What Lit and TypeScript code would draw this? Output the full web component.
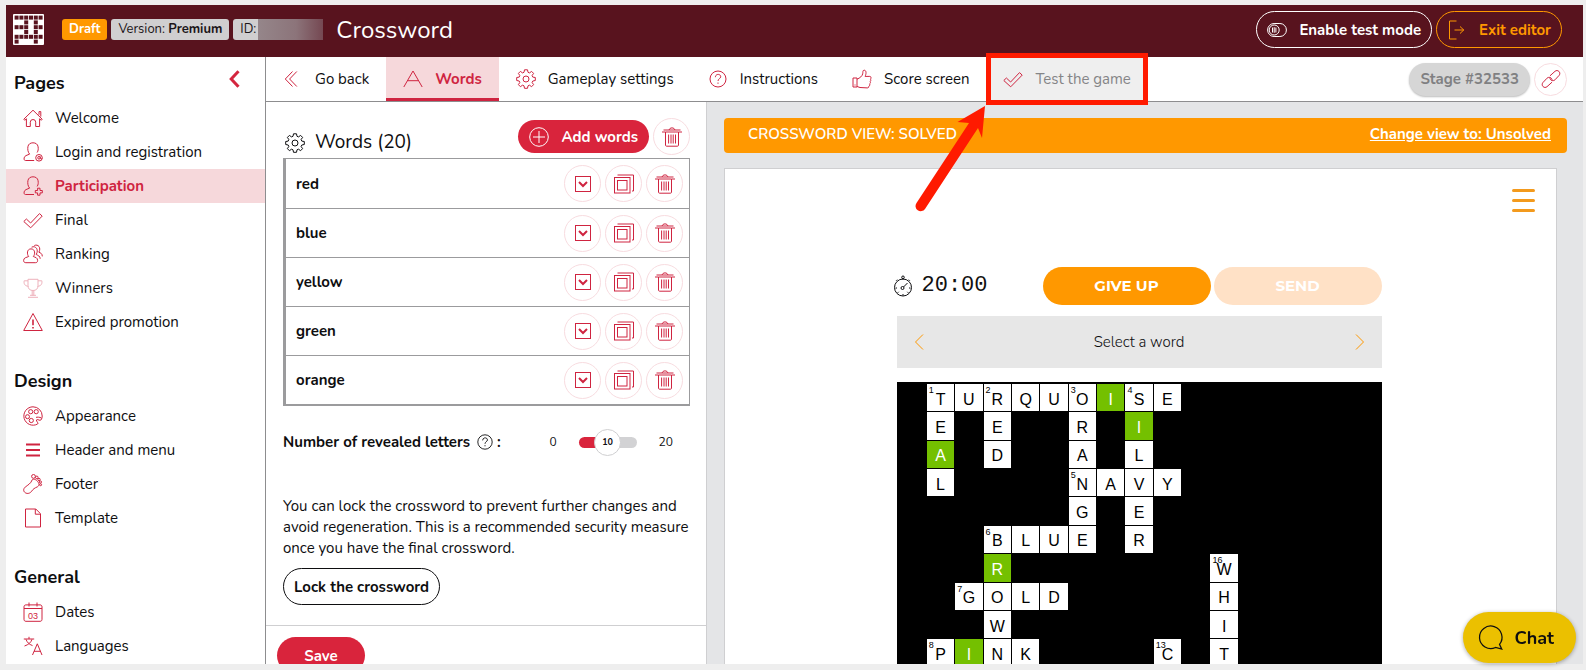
import { LitElement, html, svg, css, nothing, TemplateResult } from "lit";
import { customElement, property, state } from "lit/decorators.js";
import { classMap } from "lit/directives/class-map.js";

/* Line icons, all drawn on a 20x20 grid with the current colour. */
const icons: Record<string, TemplateResult> = {
  home: svg`<path d="M.8 11.200 10 2.200l9.200 9-1 1.100-1.600-1.600v7.800h-3.900v-4.300a2.700 2.700 0 0 0-5.400 0v4.300H3.400v-7.800l-1.600 1.600zM16 6.800V3.600h1.800v5"/>`,
  login: svg`<path d="M11.200 18.500H2.400C.4 18.500.6 14.600 3 13.600l3.600-1.500C4.700 10 4.600 7 4.900 4.800 5.300 2 7.500.8 10 .8s4.700 1.200 5.100 4c.3 2.200.2 4-1 5.700"/><circle cx="16" cy="15.800" r="3.300"/><circle cx="16" cy="15.800" r="1.300"/><path d="M17.300 14.500v1.800c.3 1 1.500.8 1.900 0"/>`,
  participate: svg`<path d="M11 18.500H2.400C.4 18.500.6 14.600 3 13.600l3.600-1.500C4.700 10 4.600 7 4.900 4.800 5.300 2 7.500.8 10 .8s4.700 1.200 5.100 4c.3 2.200.2 3.700-.9 5.600"/><path d="M14.600 12.200h2.400v2.300h2.300v2.400H17v2.300h-2.400v-2.300h-2.300v-2.400h2.300z"/>`,
  check: svg`<path d="M.8 11.500 3.400 9l4.200 4L16.500 3.600l2.700 2.500L7.700 17.800z"/>`,
  ranking: svg`<path d="M5.700 12.500c-2-2.200-1.900-7.600 2.300-7.600 4.300 0 4.400 5.400 2.300 7.600 2.100 1 4.300 1 4.300 4 0 1.700-1 2.200-2.200 2.200H2.800c-1.300 0-2.200-.8-2.200-2.200 0-3 3-3 5.100-4zM8.600 3.200c4-2 7.500 2.500 4.600 7.300 1.800 1 4 1.500 4 4.300M11.300 1.500c4-1.700 7 2.200 4.600 6.700 1.700.8 3.400 1.300 3.400 4.200"/>`,
  trophy: svg`<path d="M5 1.300h10v6.200c0 3.500-2 5-5 5s-5-1.500-5-5zM5 2.800H1.200C.6 5.600 1.700 8 5.300 8.300M15 2.800h3.800c.6 2.800-.5 5.200-4.100 5.500M9.200 12.500v5M10.800 12.500v5M7 17.300h6M5 19.300h10"/>`,
  warn: svg`<path d="M10 1.500 19.300 18.500H.7z"/><path stroke-width="1.600" d="M10 7.500v5.700M10 15v1.400"/>`,
  palette: svg`<path d="M10 .8a9.200 9.200 0 1 0 4.600 17.200c1.500-.9-1.500-2.500-1.200-4 .3-1.200 2.400.2 3.600.3 1.300 0 2.200-2 2.200-4.300A9.200 9.200 0 0 0 10 .8zM18.500 12c-2-1-4.500-1-5.500-.6"/><circle cx="7.700" cy="5.700" r="2.100"/><circle cx="13.200" cy="5.700" r="2.100"/><circle cx="4.500" cy="10.700" r="2"/><circle cx="8.300" cy="14.500" r="2.100"/>`,
  bars: svg`<path stroke-width="2" d="M3 4.500h14M3 10h14M3 15.500h14"/>`,
  foot: svg`<path d="M9.200 5.800C10.800 4.400 13.300 5.700 14.800 7.700c1.700 2.300 1.600 4.100-.6 5.200-2.600 1.200-4 2-5.400 4.100-1.500 2.300-4.300 3.200-6.600 1.700-2.100-1.500-1.900-4 0-5.600 2.500-2 5.800-3.600 7-7.300z"/><circle cx="10.500" cy="2.400" r="1.900"/><circle cx="13.800" cy="3.400" r="1.300"/><circle cx="16" cy="5.500" r="1.200"/><circle cx="17.400" cy="8" r="1.100"/><circle cx="17.600" cy="10.700" r="1"/>`,
  file: svg`<path d="M2.500 1h10.300l4.700 4.700V19h-15zM12.300 1v5.200h5.200"/>`,
  calendar: svg`<path d="M3 2.900h14c1.300 0 2 .7 2 2v12.400c0 1.300-.7 2-2 2H3c-1.300 0-2-.7-2-2V4.900c0-1.300.7-2 2-2zM1 6.500h18M6 .5v4M14 .5v4"/><text x="10" y="16.500" text-anchor="middle" font-size="9" fill="currentColor" stroke="none" font-family="Liberation Sans, sans-serif">03</text>`,
  language: svg`<path d="M.8 3h10.400M6 .8V3M3 3.300c1 3 3 5 6.500 6.300M9 3.300C8 6.500 5.500 8.700 1.500 10M9.500 19 14.300 7.800 19 19M11 15.300h6.500"/>`,
  back: svg`<path d="M9.500 2.500 2.300 10l7.200 7.500M13.800 2.500 6.600 10l7.200 7.500"/>`,
  letter: svg`<path d="M.8 18 10 2l9.200 16M4.500 11.700h11"/>`,
  gear: svg`<path d="M8.500.8h3l.5 2.500 1.500.6 2.100-1.500 2 2-1.500 2.100.7 1.600 2.500.4v3l-2.500.5-.7 1.500 1.500 2.100-2 2.100-2.100-1.500-1.500.6-.5 2.500h-3L8 16.800l-1.500-.6-2.100 1.500-2-2.100 1.400-2.100-.6-1.500-2.500-.5v-3l2.500-.4.6-1.600-1.400-2.100 2-2 2.100 1.500L8 3.300z"/><circle cx="10" cy="10" r="3"/>`,
  help: svg`<circle cx="10" cy="10" r="8"/><path d="M7.400 8.200c0-3.700 5.300-3.600 5.300-.5C12.700 9.800 10 9.600 10 12M10 13.500v1.300"/>`,
  thumb: svg`<path d="M1 9h4v9H1zM5 10.200c3-1.200 5.300-3.200 5.700-5.400.3-1.500-.1-3.600 1.400-3.600 2.400 0 2.300 3.500 1 6.200h4.700c1.600 0 1.400 2.200.6 2.700.6.800.5 1.800-.2 2.400.5.900.2 1.900-.5 2.300.3 1.100-.1 2.200-.9 2.500.2 1-.5 1.700-1.700 1.600L8 18.500l-3-1M3 15.500v1"/>`,
  plus: svg`<circle cx="10" cy="10" r="9.300"/><path d="M10 4v12M4 10h12"/>`,
  trash: svg`<path d="M0 5h3.400M16.600 5H20M1.500 3h17M7.200 3c0-2.800 5.600-2.800 5.600 0M3.500 5h13v13.200c0 .6-.5 1-1 1h-11c-.5 0-1-.4-1-1zM6.600 7.500v9M9 7.500v9M11.200 7.500v9M13.500 7.500v9"/>`,
  expand: svg`<rect x="2.500" y="2.500" width="15" height="15"/><path stroke-width="2" d="m6 8 4 4 4-4"/>`,
  copy: svg`<rect x=".5" y="3.500" width="15.500" height="15.500"/><rect x="3.500" y="6.500" width="9.500" height="9.500"/><path d="M3.500 1H19.500V17H18"/>`,
  toggle: svg`<rect x=".6" y="3.500" width="18.800" height="13" rx="6.500"/><circle cx="7.200" cy="10" r="5"/><path d="M5.500 7.500v5M7.200 7.200v5.600M8.900 7.500v5"/>`,
  exit: svg`<path d="M9.500 1H2.500v18h7M7.500 10h9.500M13 6.500l3.700 3.500L13 13.500"/>`,
  link: svg`<path d="M9 6.800 14 2.300c2.700-2.300 6.300 1.200 4.200 4L14 10.800c-2 2-5.600.3-5-2.500M11 13.200 6 17.700c-2.700 2.300-6.300-1.200-4.200-4L6 9.200c2-2 5.600-.3 5 2.500"/>`,
  watch: svg`<circle cx="10" cy="11.500" r="8.500"/><circle cx="10" cy="1.300" r="1.300"/><path d="M10 2.600v1M3.200 4.700l1-1M16.800 4.700l-1-1M10 18v1.500M2.500 12H4M16 12h1.500M4.700 16.800l1-1M15.300 16.800l-1-1M10.500 11l4-4"/><circle cx="9.500" cy="12" r="1.500"/>`,
  chat: svg`<path d="M17.200 15.500A9 9 0 1 0 14 18l5 1.300z"/>`,
  prev: svg`<path d="M14 2.500 6.500 10l7.500 7.500"/>`,
  next: svg`<path d="M6 2.500 13.500 10 6 17.500"/>`,
};

@customElement("ui-icon")
export class UiIcon extends LitElement {
  @property() name = "";
  static styles = css`
    :host { display: inline-flex; flex: none; width: 20px; height: 20px; }
    .glyph { width: 100%; height: 100%; overflow: visible; fill: none; stroke: currentColor; stroke-width: 1; }
  `;
  render() {
    return html`<svg class="glyph" viewBox="0 0 20 20" aria-hidden="true">${icons[this.name]}</svg>`;
  }
}

interface Cell { letter: string; no?: number; hit?: boolean }

const COLS = 17;
const ROWS = 11;

/* row, column, direction, number, word */
const entries: [number, number, "a" | "d", number, string][] = [
  [0, 1, "a", 1, "TURQUOISE"],
  [0, 1, "d", 1, "TEAL"],
  [0, 3, "d", 2, "RED"],
  [0, 6, "d", 3, "ORANGE"],
  [0, 8, "d", 4, "SILVER"],
  [3, 6, "a", 5, "NAVY"],
  [5, 3, "a", 6, "BLUE"],
  [5, 3, "d", 6, "BROWN"],
  [7, 2, "a", 7, "GOLD"],
  [9, 1, "a", 8, "PINK"],
  [6, 11, "d", 16, "WHIT"],
  [9, 9, "d", 13, "C"],
];
const revealed = ["0,7", "1,8", "2,1", "6,3", "9,2"];

function buildGrid(): (Cell | null)[] {
  const cells: (Cell | null)[] = Array(COLS * ROWS).fill(null);
  for (const [row, col, dir, no, word] of entries) {
    [...word].forEach((letter, i) => {
      const r = dir === "d" ? row + i : row;
      const c = dir === "a" ? col + i : col;
      const at = r * COLS + c;
      const old = cells[at];
      cells[at] = { letter, no: i === 0 ? no : old?.no, hit: revealed.includes(`${r},${c}`) };
    });
  }
  return cells;
}

@customElement("crossword-grid")
export class CrosswordGrid extends LitElement {
  static styles = css`
    :host { display: block; }
    .grid {
      display: grid;
      grid-template-columns: repeat(17, 1fr);
      gap: 1px;
      padding: 2px;
      background: #000;
      font-family: "Liberation Sans", Arial, sans-serif;
    }
    .cell { aspect-ratio: 1; }
    .open {
      position: relative;
      display: grid;
      place-items: center;
      box-sizing: border-box;
      padding-top: 4px;
      background: #fff;
      color: #000;
      font-size: 16px;
      line-height: 18px;
    }
    .hit { background: #74c000; color: #fff; }
    .no { position: absolute; top: 2px; left: 2px; font-size: 9px; line-height: 9px; }
  `;
  render() {
    return html`<div class="grid">
      ${buildGrid().map((c) =>
        c
          ? html`<div class=${classMap({ cell: true, open: true, hit: !!c.hit })}>
              ${c.no ? html`<span class="no">${c.no}</span>` : nothing}${c.letter}
            </div>`
          : html`<div class="cell"></div>`
      )}
    </div>`;
  }
}

const menu: { title: string; items: [string, string][] }[] = [
  {
    title: "Pages",
    items: [
      ["home", "Welcome"],
      ["login", "Login and registration"],
      ["participate", "Participation"],
      ["check", "Final"],
      ["ranking", "Ranking"],
      ["trophy", "Winners"],
      ["warn", "Expired promotion"],
    ],
  },
  {
    title: "Design",
    items: [
      ["palette", "Appearance"],
      ["bars", "Header and menu"],
      ["foot", "Footer"],
      ["file", "Template"],
    ],
  },
  {
    title: "General",
    items: [
      ["calendar", "Dates"],
      ["language", "Languages"],
    ],
  },
];

const tabs: [string, string][] = [
  ["back", "Go back"],
  ["letter", "Words"],
  ["gear", "Gameplay settings"],
  ["help", "Instructions"],
  ["thumb", "Score screen"],
  ["check", "Test the game"],
];

const words = ["red", "blue", "yellow", "green", "orange"];

/* Filled pixels of the logo, six columns wide. */
const logoRows = ["111111", "001010", "111011", "001010", "111111", "100010"];

@customElement("app-root")
export class AppRoot extends LitElement {
  @state() private revealedLetters = 10;

  static styles = css`
    :host {
      display: flex;
      flex-direction: column;
      box-sizing: border-box;
      height: 100vh;
      padding: 5px 3px 6px 6px;
      overflow: hidden;
      background: #eee;
      color: #0e0e10;
      font-family: Nunito, Lato, sans-serif;
      font-size: 15px;
      line-height: 20px;
    }
    *, *::before { box-sizing: border-box; }
    button { font: inherit; color: inherit; padding: 0; border: 0; background: none; cursor: pointer; }
    h1, h2, p { margin: 0; font-weight: 400; }
    a { color: inherit; text-decoration: none; }

    .top {
      display: flex;
      align-items: center;
      flex: none;
      height: 52px;
      padding: 0 21px 3px 7px;
      background: #58131e;
      color: #fff;
    }
    .logo { width: 31px; height: 31px; margin-right: 18px; }
    .badges { display: flex; gap: 4px; }
    .badge {
      padding: 0 7px;
      border-radius: 3px;
      background: #d0cfd0;
      color: #1b1518;
      font-size: 13px;
      line-height: 21px;
    }
    .draft { background: #ff9800; color: #fff; font-weight: 700; }
    .ident {
      width: 90px;
      border-radius: 3px 0 0 3px;
      background: linear-gradient(90deg, #d0cfd0 25px, #95868a 25px, #8c747a 70%, #754852);
    }
    .title { margin-left: 13px; font-size: 24px; line-height: 30px; }
    .actions { display: flex; gap: 4px; margin-left: auto; }
    .pill {
      display: inline-flex;
      align-items: center;
      gap: 12px;
      height: 37px;
      padding: 0 10px;
      border: 1px solid currentColor;
      border-radius: 19px;
      font-weight: 700;
    }
    .exit { color: #ff9800; }

    .body {
      display: grid;
      grid-template: minmax(0, 1fr) / 260px minmax(0, 1fr);
      flex: 1;
      min-height: 0;
    }
    .side { border-right: 1px solid #8d8d8f; background: #fff; overflow: hidden; }
    .group { padding-top: 12px; }
    .group + .group { padding-top: 28px; }
    .head {
      display: flex;
      align-items: center;
      justify-content: space-between;
      height: 28px;
      margin-bottom: 4px;
      padding: 0 25px 0 8px;
    }
    .head h2 { font-size: 18px; font-weight: 700; }
    .fold { color: #d4263f; width: 11px; height: 28px; padding-bottom: 8px; }
    .fold svg { display: block; width: 11px; height: 18px; fill: none; stroke: currentColor; stroke-width: 3; }
    .item { display: flex; align-items: center; gap: 12px; height: 34px; padding-left: 17px; }
    .item ui-icon, .tab ui-icon { color: #cf2440; }
    .item .pale { opacity: 0.35; }
    .item.on { background: #f6d8db; color: #cf2440; font-weight: 700; }

    .main { display: flex; flex-direction: column; min-width: 0; min-height: 0; }
    .bar {
      display: flex;
      align-items: stretch;
      flex: none;
      height: 45px;
      padding-right: 16px;
      border-bottom: 1px solid #8d8d8f;
      background: #fff;
    }
    .tabs { display: flex; }
    .tab { position: relative; display: flex; align-items: center; gap: 12px; padding: 0 17px; white-space: nowrap; }
    .tab.on { background: #f6d8db; color: #cf2440; font-weight: 700; box-shadow: inset 0 -3px #cf2440; }
    .tab.off { background: #efefef; color: #858587; }
    .mark { position: absolute; z-index: 3; top: -4px; left: 0; width: 100%; height: 52px; border: 5px solid #ff1a00; pointer-events: none; }
    .arrow { position: absolute; z-index: 3; top: 48px; left: -72px; width: 76px; height: 108px; fill: #ff1a00; pointer-events: none; }
    .stage { display: flex; align-items: center; gap: 4px; margin-left: auto; }
    .stage-no {
      height: 33px;
      padding: 0 11px;
      border-radius: 17px;
      background: #d6d6d6;
      color: #808082;
      font-weight: 700;
      box-shadow: 0 1px 2px #bbb;
    }
    .round {
      display: grid;
      place-items: center;
      flex: none;
      width: 37px;
      height: 37px;
      border: 1px solid #f8dce0;
      border-radius: 50%;
      color: #cf2440;
    }
    .round.small { width: 33px; height: 33px; }

    .split {
      display: grid;
      grid-template: minmax(0, 1fr) / 441px minmax(0, 1fr);
      flex: 1;
      min-height: 0;
    }
    .panel { border-right: 1px solid #cfcfd1; background: #fff; overflow: hidden; }
    .editor { padding: 16px 16px 20px 17px; }
    .panel-head { display: flex; align-items: center; height: 37px; margin-bottom: 3px; }
    .panel-head h1 { display: flex; align-items: center; gap: 10px; padding: 12px 0 0 2px; font-size: 19px; line-height: 25px; }
    .panel-tools { display: flex; align-items: center; gap: 4px; margin-left: auto; }
    .add { gap: 12px; height: 33px; padding: 0 11px; border: 0; background: #d9243c; color: #fff; }
    .list { margin: 0; padding: 0; list-style: none; border: 1px solid #9b9b9d; border-width: 1px 1px 2px 3px; }
    .row { display: flex; align-items: center; gap: 4px; height: 49px; padding: 0 6px 0 10px; font-weight: 700; }
    .row + .row { border-top: 1px solid #9b9b9d; }
    .row span { margin-right: auto; }

    .reveal { display: flex; align-items: center; height: 30px; margin: 21px 0 39px; }
    .reveal label { font-weight: 700; }
    .reveal ui-icon { width: 18px; height: 18px; margin: 0 3px 0 6px; }
    .scale { display: flex; align-items: center; gap: 22px; margin-left: auto; padding-right: 17px; font-size: 12px; }
    .slider { position: relative; display: flex; width: 58px; height: 28px; }
    .slider input { width: 100%; height: 28px; margin: 0; appearance: none; background: none; }
    .slider input::-webkit-slider-runnable-track {
      height: 11px;
      border-radius: 6px;
      background: linear-gradient(90deg, #d9243c 50%, #d2d2d4 50%);
    }
    .slider input::-webkit-slider-thumb {
      appearance: none;
      width: 27px;
      height: 27px;
      margin-top: -8px;
      border: 1px solid #cfcfd1;
      border-radius: 50%;
      background: #fff;
    }
    .slider output {
      position: absolute;
      inset: 0;
      display: grid;
      place-items: center;
      font-size: 9px;
      font-weight: 700;
      pointer-events: none;
    }
    .note { line-height: 21px; white-space: nowrap; }
    .lock { margin-top: 9px; border-color: #0e0e10; }
    .foot { display: flex; padding: 11px; border-top: 1px solid #cfcfd1; }
    .save { flex: none; width: 88px; height: 37px; border-radius: 19px; background: #d9243c; color: #fff; font-weight: 700; }

    .preview { padding: 16px 16px 0 17px; background: #e4e5e7; overflow: hidden; }
    .banner {
      display: flex;
      align-items: center;
      justify-content: space-between;
      height: 35px;
      padding: 0 16px 3px 24px;
      border-radius: 4px;
      background: #ff9800;
      color: #fff;
      font-weight: 600;
    }
    .banner a { font-weight: 700; text-decoration: underline; }
    .page {
      display: flex;
      flex-direction: column;
      align-items: center;
      margin: 15px 10px 0 0;
      padding: 19px 21px 0 18px;
      border: 1px solid #cfcfd1;
      background: #fff;
    }
    .burger { display: grid; gap: 7px; align-self: flex-end; padding: 1px 0; }
    .burger i { width: 23px; height: 3px; border-radius: 2px; background: #f39a1d; }
    .game { width: 485px; max-width: 100%; margin-top: 54px; }
    .controls { display: flex; align-items: center; gap: 3px; height: 38px; margin-bottom: 11px; }
    .clock { display: flex; align-items: center; gap: 9px; margin: 0 auto 0 -4px; }
    .time { font-family: "Liberation Mono", monospace; font-size: 22px; line-height: 24px; color: #111; }
    .play {
      width: 168px;
      height: 38px;
      border-radius: 19px;
      background: #ff9800;
      color: #fff;
      font-family: Montserrat, "Open Sans", sans-serif;
      font-weight: 700;
    }
    .play:disabled { background: #ffe1c6; }
    .picker {
      display: flex;
      align-items: center;
      justify-content: space-between;
      height: 52px;
      margin-bottom: 14px;
      padding: 0 12px;
      background: #e7e7e7;
      font-weight: 300;
    }
    .picker button { display: flex; color: #ff9800; }

    .chat {
      position: fixed;
      z-index: 4;
      right: 10px;
      bottom: 7px;
      display: flex;
      align-items: center;
      gap: 11px;
      height: 51px;
      padding: 0 22px 0 15px;
      border-radius: 26px;
      background: #ebc000;
      box-shadow: 0 1px 4px #0005;
      font-size: 18px;
      font-weight: 700;
    }
    .chat ui-icon { width: 25px; height: 25px; }
  `;

  private onSlide(e: Event) {
    this.revealedLetters = Number((e.target as HTMLInputElement).value);
  }

  private renderLogo() {
    return html`<svg class="logo" viewBox="0 0 31 31" aria-label="Logo">
      <rect width="31" height="31" rx="1" fill="#fff" />
      ${logoRows.map((row, y) =>
        [...row].map((bit, x) =>
          bit === "1" ? svg`<rect x=${1.6 + x * 4.8} y=${1.6 + y * 4.8} width="4" height="4" fill="#58131e" />` : nothing
        )
      )}
    </svg>`;
  }

  private renderSide() {
    return html`<nav class="side">
      ${menu.map(
        (group, i) => html`<section class="group">
          <div class="head">
            <h2>${group.title}</h2>
            ${i === 0
              ? html`<button class="fold" aria-label="Collapse menu">
                  <svg viewBox="0 0 11 18"><path d="M9.500 1.200 2.200 9l7.300 7.800" /></svg>
                </button>`
              : nothing}
          </div>
          ${group.items.map(
            ([icon, label]) => html`<a href="#" class=${classMap({ item: true, on: label === "Participation" })}>
              <ui-icon class=${icon === "trophy" ? "pale" : ""} name=${icon}></ui-icon>${label}
            </a>`
          )}
        </section>`
      )}
    </nav>`;
  }

  private renderBar() {
    return html`<div class="bar">
      <nav class="tabs">
        ${tabs.map(
          ([icon, label], i) => html`<a href="#" class=${classMap({ tab: true, on: i === 1, off: i === 5 })}>
            <ui-icon name=${icon}></ui-icon>${label}
            ${i === 5
              ? html`<span class="mark"></span>
                  <svg class="arrow" viewBox="0 0 76 108" aria-hidden="true">
                    <path d="M71 1 43.500 17l11.500 1L2.500 98a5 5 0 0 0 8.500 6L64 23l4 10z" />
                  </svg>`
              : nothing}
          </a>`
        )}
      </nav>
      <div class="stage">
        <button class="stage-no">Stage #32533</button>
        <button class="round small" aria-label="Copy link"><ui-icon name="link"></ui-icon></button>
      </div>
    </div>`;
  }

  private renderPanel() {
    return html`<section class="panel">
      <div class="editor">
        <div class="panel-head">
          <h1><ui-icon name="gear"></ui-icon>Words (20)</h1>
          <div class="panel-tools">
            <button class="pill add"><ui-icon name="plus"></ui-icon>Add words</button>
            <button class="round" aria-label="Delete all"><ui-icon name="trash"></ui-icon></button>
          </div>
        </div>
        <ul class="list">
          ${words.map(
            (word) => html`<li class="row">
              <span>${word}</span>
              <button class="round" aria-label="Expand"><ui-icon name="expand"></ui-icon></button>
              <button class="round" aria-label="Duplicate"><ui-icon name="copy"></ui-icon></button>
              <button class="round" aria-label="Delete"><ui-icon name="trash"></ui-icon></button>
            </li>`
          )}
        </ul>
        <div class="reveal">
          <label for="letters">Number of revealed letters</label><ui-icon name="help"></ui-icon><b>:</b>
          <div class="scale">
            <span>0</span>
            <div class="slider">
              <input id="letters" type="range" min="0" max="20" .value=${String(this.revealedLetters)} @input=${this.onSlide} />
              <output for="letters">${this.revealedLetters}</output>
            </div>
            <span>20</span>
          </div>
        </div>
        <p class="note">
          You can lock the crossword to prevent further changes and<br />avoid regeneration. This is a recommended security
          measure<br />once you have the final crossword.
        </p>
        <button class="pill lock">Lock the crossword</button>
      </div>
      <div class="foot"><button class="save">Save</button></div>
    </section>`;
  }

  private renderPreview() {
    return html`<section class="preview">
      <div class="banner"><span>CROSSWORD VIEW: SOLVED</span><a href="#">Change view to: Unsolved</a></div>
      <div class="page">
        <button class="burger" aria-label="Menu"><i></i><i></i><i></i></button>
        <div class="game">
          <div class="controls">
            <div class="clock"><ui-icon name="watch"></ui-icon><span class="time">20:00</span></div>
            <button class="play">GIVE UP</button>
            <button class="play" disabled>SEND</button>
          </div>
          <div class="picker">
            <button aria-label="Previous word"><ui-icon name="prev"></ui-icon></button>
            <span>Select a word</span>
            <button aria-label="Next word"><ui-icon name="next"></ui-icon></button>
          </div>
          <crossword-grid></crossword-grid>
        </div>
      </div>
    </section>`;
  }

  render() {
    return html`
      <header class="top">
        ${this.renderLogo()}
        <div class="badges">
          <span class="badge draft">Draft</span>
          <span class="badge">Version: <b>Premium</b></span>
          <span class="badge ident">ID:</span>
        </div>
        <h1 class="title">Crossword</h1>
        <div class="actions">
          <button class="pill"><ui-icon name="toggle"></ui-icon>Enable test mode</button>
          <button class="pill exit"><ui-icon name="exit"></ui-icon>Exit editor</button>
        </div>
      </header>
      <div class="body">
        ${this.renderSide()}
        <main class="main">
          ${this.renderBar()}
          <div class="split">${this.renderPanel()} ${this.renderPreview()}</div>
        </main>
      </div>
      <button class="chat"><ui-icon name="chat"></ui-icon>Chat</button>
    `;
  }
}
